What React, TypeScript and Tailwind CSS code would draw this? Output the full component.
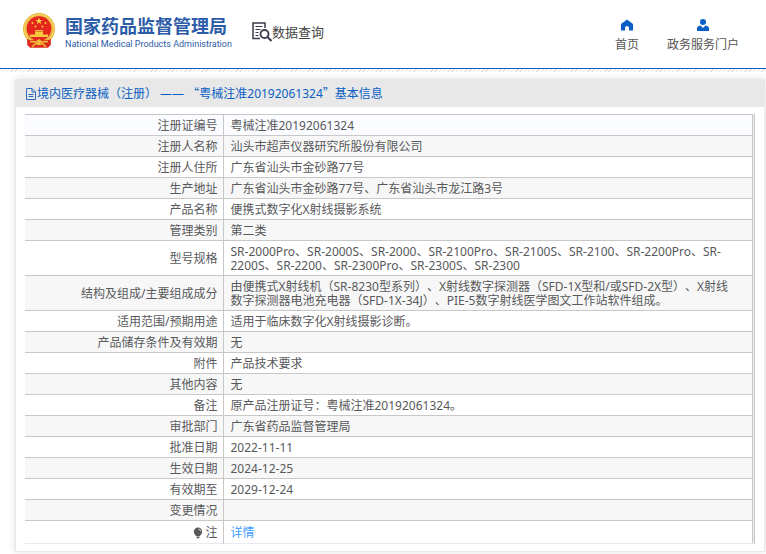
import type { ReactNode } from "react";

type Row = {
  label: ReactNode;
  value: ReactNode;
};

const rows: Row[] = [
  { label: "注册证编号", value: "粤械注准20192061324" },
  { label: "注册人名称", value: "汕头市超声仪器研究所股份有限公司" },
  { label: "注册人住所", value: "广东省汕头市金砂路77号" },
  { label: "生产地址", value: "广东省汕头市金砂路77号、广东省汕头市龙江路3号" },
  { label: "产品名称", value: "便携式数字化X射线摄影系统" },
  { label: "管理类别", value: "第二类" },
  {
    label: "型号规格",
    value:
      "SR-2000Pro、SR-2000S、SR-2000、SR-2100Pro、SR-2100S、SR-2100、SR-2200Pro、SR-2200S、SR-2200、SR-2300Pro、SR-2300S、SR-2300",
  },
  {
    label: "结构及组成/主要组成成分",
    value:
      "由便携式X射线机（SR-8230型系列）、X射线数字探测器（SFD-1X型和/或SFD-2X型）、X射线数字探测器电池充电器（SFD-1X-34J）、PIE-5数字射线医学图文工作站软件组成。",
  },
  { label: "适用范围/预期用途", value: "适用于临床数字化X射线摄影诊断。" },
  { label: "产品储存条件及有效期", value: "无" },
  { label: "附件", value: "产品技术要求" },
  { label: "其他内容", value: "无" },
  { label: "备注", value: "原产品注册证号：粤械注准20192061324。" },
  { label: "审批部门", value: "广东省药品监督管理局" },
  { label: "批准日期", value: "2022-11-11" },
  { label: "生效日期", value: "2024-12-25" },
  { label: "有效期至", value: "2029-12-24" },
  { label: "变更情况", value: "" },
];

function Emblem() {
  return (
    <svg viewBox="0 0 32 35" className="h-[35px] w-8 shrink-0" aria-hidden="true">
      <path d="M5 24h22l.5 8-2.500 2.500H7L4.500 32z" fill="#dc2a1c" />
      <circle cx="16" cy="16" r="16" fill="#e9b23c" />
      <circle cx="16" cy="16" r="14.400" fill="none" stroke="#f7d768" strokeWidth="1.200" />
      <circle cx="16" cy="15.500" r="12.300" fill="#e5261f" />
      <path d="M16 4.500l.9 2.500h2.700l-2.200 1.600.8 2.600-2.200-1.600-2.200 1.600.8-2.600L12.400 7h2.700z" fill="#f9d648" />
      <g fill="#f5c83e">
        <circle cx="9.500" cy="10" r="1" />
        <circle cx="22.500" cy="10" r="1" />
        <circle cx="12.500" cy="13.500" r="1" />
        <circle cx="19.500" cy="13.500" r="1" />
        <path d="M11.500 18.500l1-1.500h7l1 1.500zM12 19h8v2.500h-8zM7 21.500h18V24H7z" />
      </g>
      <path d="M4 26q5 2 8 1l4-2 4 2q3 1 8-1l-.5 6-2.500 2.500H7L4.500 32z" fill="#dc2a1c" />
      <path d="M7 28.500l6 .5 3-2 3 2 6-.5M9 34l3.500-3.500 3.500 1 3.500-1L23 34" fill="none" stroke="#f3bf3a" strokeWidth="1.500" />
      <circle cx="16" cy="29.500" r="2" fill="#f3bf3a" />
    </svg>
  );
}

function SearchDocIcon() {
  return (
    <svg viewBox="0 0 20 20" className="h-5 w-5 shrink-0" fill="none" stroke="#3c3c4c" aria-hidden="true">
      <path d="M13 6V1H1v15.500h7" strokeWidth="1.500" />
      <path d="M3.500 4.500h7M3.500 7.500h5M3.500 10.500h3M3.500 13.500h3" strokeWidth="1.200" />
      <circle cx="12.500" cy="12" r="4" strokeWidth="1.800" />
      <path d="M15.500 15l4 4" strokeWidth="2.200" />
    </svg>
  );
}

function HomeIcon() {
  return (
    <svg viewBox="0 0 12 12" className="h-3 w-3" fill="#0a5fc4" aria-hidden="true">
      <path d="M6 .5L0 5v6.500h4V9a2 2 0 0 1 4 0v2.500h4V5z" />
    </svg>
  );
}

function UserIcon() {
  return (
    <svg viewBox="0 0 12 12" className="h-3 w-3" fill="#0a5fc4" aria-hidden="true">
      <circle cx="6" cy="3" r="3" />
      <path d="M0 12V9.500q0-2.500 3.500-3L6 9l2.500-2.500q3.500.5 3.500 3V12z" />
    </svg>
  );
}

function FileIcon() {
  return (
    <svg viewBox="0 0 12 12" className="h-3 w-3 shrink-0" fill="none" stroke="#2a6cc4" aria-hidden="true">
      <path d="M1.500.5H7L10.500 4v7.500h-9zM7 .5V4h3.500M3.500 6.500h5M3.500 8.500h5" />
    </svg>
  );
}

function BulbIcon() {
  return (
    <svg viewBox="0 0 10 12" className="h-3 w-2.5" aria-hidden="true">
      <path d="M5 .5a4.200 4.200 0 0 1 4.200 4.300C9.200 7 7.500 7.500 7 9H3C2.500 7.500.8 7 .8 4.800A4.200 4.200 0 0 1 5 .5zM3.500 9.500h3v1L5.500 11.500h-1l-1-1z" fill="#58595b" />
      <path d="M5.500 2q2 .3 2.200 2.500" fill="none" stroke="#fff" strokeWidth=".8" />
    </svg>
  );
}

function Header() {
  return (
    <header className="border-b border-[#0a5fc4] bg-white">
      <div className="flex h-[68px] items-center pl-[23px] pr-[27px]">
        <a href="#" className="flex items-center gap-2.5 pb-2">
          <Emblem />
          <span className="flex flex-col pt-1 text-[#2c5ca8]">
            <span className="text-[18px] leading-6 font-bold">国家药品监督管理局</span>
            <span className="font-['Roboto','Liberation_Sans',sans-serif] text-[9px] leading-3">
              National Medical Products Administration
            </span>
          </span>
        </a>
        <div className="ml-5 flex items-center pb-1">
          <SearchDocIcon />
          <span className="text-[13px] leading-5 text-[#444]">数据查询</span>
        </div>
        <nav className="ml-auto flex gap-7 pt-1 text-[12px] leading-4 text-[#555]">
          <a href="#" className="flex flex-col items-center gap-1.5">
            <HomeIcon />
            首页
          </a>
          <a href="#" className="flex flex-col items-center gap-1.5">
            <UserIcon />
            政务服务门户
          </a>
        </nav>
      </div>
    </header>
  );
}

export default function App() {
  return (
    <div className="bg-white font-['Noto_Sans','Noto_Sans_CJK_SC',sans-serif] text-[12px] text-[#58595b] [text-spacing-trim:space-all]">
      <Header />
      <div className="h-[3px] bg-[repeating-linear-gradient(135deg,#e2e2e2_0_1px,#fff_1px_3px)]" />
      <main className="mt-[7px] mr-px mb-[3px] ml-[15px] border border-[#e8e8e8] bg-white shadow-[0_0_8px_rgba(0,0,0,0.12)]">
        <h1 className="flex h-[27px] items-center bg-[#e8e8e8] pl-[9px] text-[#0a5fc4]">
          <FileIcon />
          <span>
            境内医疗器械（注册） —— <span className="font-['Noto_Sans_CJK_SC',sans-serif]">“</span>
            粤械注准20192061324
            <span className="font-['Noto_Sans_CJK_SC',sans-serif]">”</span>基本信息
          </span>
        </h1>
        <div className="mx-[9px] mt-[7px] mb-[7px] border-r border-[#c8c8c8] bg-[#ececf2] pr-px">
          <table className="w-full border-collapse leading-[14px]">
            <tbody>
              {rows.map((row, i) => (
                <tr
                  key={i}
                  className={`border-t border-r border-[#c8c8c8] ${i === 0 ? "bg-[#fafcff]" : i % 2 ? "bg-[#f7f7f7]" : "bg-white"}`}
                >
                  <th scope="row" className="w-[198px] border-r border-[#c8c8c8] pt-1 pr-[5px] pb-0.5 text-right font-normal">
                    {row.label}
                  </th>
                  <td className="h-[21px] pt-1 pr-4 pb-0.5 pl-[7px]">{row.value}</td>
                </tr>
              ))}
              <tr className="border-t border-r border-b border-[#c8c8c8] border-b-[#e9e9f2] bg-white">
                <th scope="row" className="border-r border-[#c8c8c8] pt-[5px] pr-[5px] pb-[3px] font-normal">
                  <span className="flex items-center justify-end gap-0.5">
                    <BulbIcon />注
                  </span>
                </th>
                <td className="pt-[5px] pb-[3px] pl-[7px]">
                  <a href="#" className="text-[#409eff]">
                    详情
                  </a>
                </td>
              </tr>
            </tbody>
          </table>
        </div>
      </main>
    </div>
  );
}
